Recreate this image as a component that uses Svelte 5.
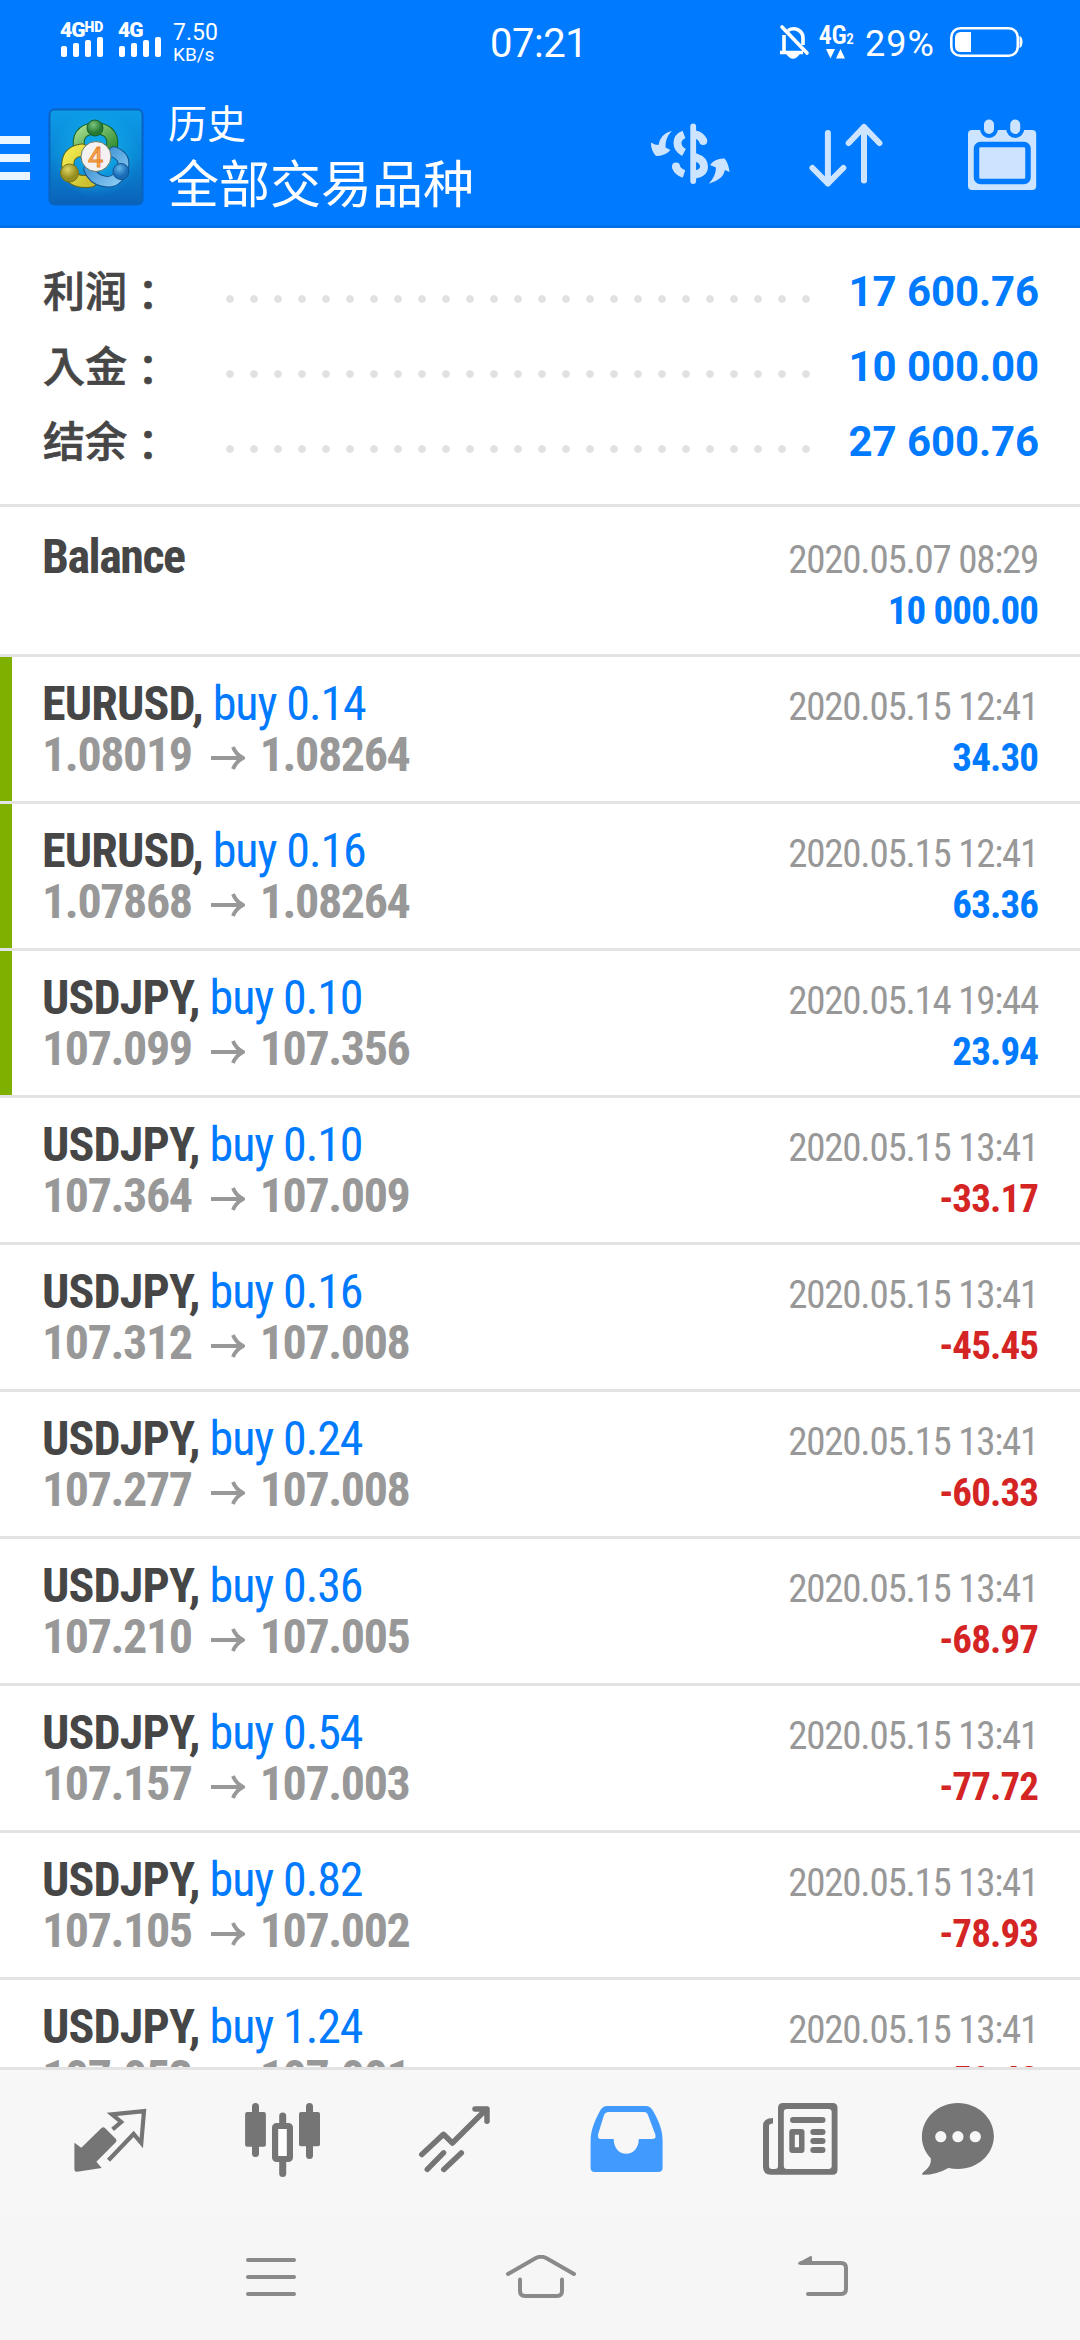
<script lang="ts">
  const summary = [
    { label: '利润', value: '17 600.76' },
    { label: '入金', value: '10 000.00' },
    { label: '结余', value: '27 600.76' }
  ];

  const deals = [
    { symbol: 'EURUSD', volume: '0.14', open: '1.08019', close: '1.08264', time: '2020.05.15 12:41', profit: '34.30', marked: true },
    { symbol: 'EURUSD', volume: '0.16', open: '1.07868', close: '1.08264', time: '2020.05.15 12:41', profit: '63.36', marked: true },
    { symbol: 'USDJPY', volume: '0.10', open: '107.099', close: '107.356', time: '2020.05.14 19:44', profit: '23.94', marked: true },
    { symbol: 'USDJPY', volume: '0.10', open: '107.364', close: '107.009', time: '2020.05.15 13:41', profit: '-33.17' },
    { symbol: 'USDJPY', volume: '0.16', open: '107.312', close: '107.008', time: '2020.05.15 13:41', profit: '-45.45' },
    { symbol: 'USDJPY', volume: '0.24', open: '107.277', close: '107.008', time: '2020.05.15 13:41', profit: '-60.33' },
    { symbol: 'USDJPY', volume: '0.36', open: '107.210', close: '107.005', time: '2020.05.15 13:41', profit: '-68.97' },
    { symbol: 'USDJPY', volume: '0.54', open: '107.157', close: '107.003', time: '2020.05.15 13:41', profit: '-77.72' },
    { symbol: 'USDJPY', volume: '0.82', open: '107.105', close: '107.002', time: '2020.05.15 13:41', profit: '-78.93' },
    { symbol: 'USDJPY', volume: '1.24', open: '107.053', close: '107.001', time: '2020.05.15 13:41', profit: '-59.48' }
  ];
</script>

<div class="screen">
  <header>
    <div class="status">
      <div class="signal">
        <span class="net">4G<sup>HD</sup></span>
        <div class="bars"><i></i><i></i><i></i><i></i></div>
      </div>
      <div class="signal second">
        <span class="net">4G</span>
        <div class="bars"><i></i><i></i><i></i><i></i></div>
      </div>
      <div class="speed"><span>7.50</span><small>KB/s</small></div>
      <div class="clock">07:21</div>
      <svg class="bell" width="32" height="36" viewBox="0 0 32 36" fill="none" stroke="#fff" stroke-width="3.6">
        <path d="M6 11V27M10 6.500C17 2 25 7 25 14V21M2 28.500H25" />
        <path d="M4 3L29 29" stroke-linecap="round" />
        <path d="M9 29.500Q15 38 21 29.500Z" fill="#fff" stroke-width="2" />
      </svg>
      <div class="data">
        <span>4G<sub>2</sub></span>
        <svg width="20" height="10" viewBox="0 0 20 10" fill="#fff"><path d="M0 0H9L4.500 9.500ZM10 9.500H19L14.500 0Z" /></svg>
      </div>
      <span class="percent">29%</span>
      <svg class="battery" width="73" height="30" viewBox="0 0 73 30">
        <rect x="1.300" y="1.300" width="66.500" height="27.400" rx="9" fill="none" stroke="#fff" stroke-width="2.600" />
        <path d="M21 5V25H11Q5 25 5 19V11Q5 5 11 5Z" fill="#fff" />
        <path d="M69.500 9Q72.500 10 72.500 15T69.500 21Z" fill="#fff" />
      </svg>
    </div>

    <div class="toolbar">
      <div class="menu"><i></i><i></i><i></i></div>
      <svg class="logo" width="96" height="98" viewBox="0 0 96 98">
        <defs>
          <linearGradient id="tile" x1="0" y1="0" x2="0" y2="1">
            <stop offset="0" stop-color="#0c9ce8" />
            <stop offset=".5" stop-color="#0a86d4" />
            <stop offset="1" stop-color="#0a62b8" />
          </linearGradient>
          <radialGradient id="glow"><stop offset="0" stop-color="#12b4ee" /><stop offset="1" stop-color="#12b4ee" stop-opacity="0" /></radialGradient>
          <linearGradient id="green" x1="0" y1="0" x2="1" y2="1"><stop offset="0" stop-color="#a4dc8c" /><stop offset="1" stop-color="#2c8a2e" /></linearGradient>
          <linearGradient id="yellow" x1="0" y1="0" x2="1" y2="1"><stop offset="0" stop-color="#f2ea4e" /><stop offset="1" stop-color="#c9bd30" /></linearGradient>
          <linearGradient id="blue" x1="0" y1="0" x2="1" y2="1"><stop offset="0" stop-color="#2f86cc" /><stop offset="1" stop-color="#8ccdf5" /></linearGradient>
          <radialGradient id="headGreen" cx=".4" cy=".3"><stop offset="0" stop-color="#7cc47c" /><stop offset="1" stop-color="#257a35" /></radialGradient>
          <radialGradient id="headYellow" cx=".4" cy=".3"><stop offset="0" stop-color="#ddd662" /><stop offset="1" stop-color="#958d1e" /></radialGradient>
          <radialGradient id="headBlue" cx=".4" cy=".3"><stop offset="0" stop-color="#62b6ea" /><stop offset="1" stop-color="#1a6cb6" /></radialGradient>
        </defs>
        <rect x="1.500" y="1.500" width="93" height="95" rx="5" fill="url(#tile)" stroke="#0b63c0" stroke-width="2" />
        <circle cx="48" cy="46" r="44" fill="url(#glow)" />
        <g fill="none" stroke-linecap="round">
          <path d="M32 43Q26 22 47.500 20Q69 22 63 43" stroke="#17602a" stroke-width="12" />
          <path d="M32 43Q26 22 47.500 20Q69 22 63 43" stroke="url(#green)" stroke-width="10" />
          <path d="M34 42Q18 44 20 60Q22 76 43 73" stroke="#5e641c" stroke-width="13" />
          <path d="M34 42Q18 44 20 60Q22 76 43 73" stroke="url(#yellow)" stroke-width="11" />
          <path d="M66 44Q78 49 75 60Q69 77 55 73Q45 71 41 61" stroke="#114f8c" stroke-width="11.500" />
          <path d="M66 44Q78 49 75 60Q69 77 55 73Q45 71 41 61" stroke="url(#blue)" stroke-width="9.500" />
        </g>
        <circle cx="47" cy="20" r="8" fill="url(#headGreen)" stroke="#17602a" />
        <circle cx="21.500" cy="65" r="9" fill="url(#headYellow)" stroke="#77741c" />
        <circle cx="73" cy="63.500" r="8" fill="url(#headBlue)" stroke="#115390" />
        <circle cx="48" cy="48.500" r="15" fill="#f3f1f2" stroke="#6d7c62" />
        <text x="47.500" y="58.500" text-anchor="middle" font-size="27" font-weight="400" fill="#f8b060" stroke="#e8842c" stroke-width="1">4</text>
      </svg>
      <div class="heading">
        <span class="section">历史</span>
        <span class="filter">全部交易品种</span>
      </div>
      <svg class="tool-dollar" width="90" height="80" viewBox="0 0 90 80" fill="none" stroke="#cce4ff" stroke-width="8">
        <path d="M48.200 6.500V61" stroke-width="5.800" stroke-linecap="round" />
        <path d="M39 14.500Q32.500 17 32.500 23T39 32.500M50 14.500Q56 15.500 58.200 21M50 37Q59 40 59 46.500T50 54.500M31 47Q33 52 39 54" />
        <circle cx="58.200" cy="21" r="4" fill="#cce4ff" stroke="none" />
        <circle cx="31" cy="46.500" r="4" fill="#cce4ff" stroke="none" />
        <g fill="#cce4ff" stroke="none">
          <path d="M26.900 10.700Q15 14 13.500 25Q10 25 5.900 22.500Q6 31 11 36Q20 36 25.500 30L20.500 27.500Q20 18 26.900 10.700Z" />
          <path d="M63.700 63.700Q78 60 80 50L84.500 52Q83.500 43 79.500 38.500Q70 38 65 45L71 47.500Q71 56 63.700 63.700Z" />
        </g>
      </svg>
      <svg class="tool-sort" width="80" height="80" viewBox="0 0 80 80" fill="none" stroke="#cce4ff" stroke-width="6" stroke-linecap="round" stroke-linejoin="round">
        <path d="M22.900 13V63.500M7.500 48L22.900 63.500L38.300 48M59 60.500V7M43.700 23L59 7L74.400 23" />
      </svg>
      <svg class="tool-calendar" width="80" height="80" viewBox="0 0 80 80" fill="#cce4ff">
        <rect x="5" y="15" width="68.200" height="60" rx="4" />
        <rect x="13.500" y="29.500" width="51.500" height="37" rx="4" fill="none" stroke="#007aff" stroke-width="5.500" />
        <g stroke="#007aff" stroke-width="4">
          <rect x="19" y="2.500" width="14" height="18.500" rx="7" />
          <rect x="45.200" y="2.500" width="14" height="18.500" rx="7" />
        </g>
      </svg>
    </div>
  </header>

  <main>
    <section class="summary">
      {#each summary as item}
        <div class="total">
          <span class="label">{item.label}<span class="colon">：</span></span>
          <span class="dots"></span>
          <span class="value">{item.value}</span>
        </div>
      {/each}
    </section>

    <div class="row balance">
      <div class="line"><b class="symbol">Balance</b><span class="time">2020.05.07 08:29</span></div>
      <div class="line"><span>&nbsp;</span><b class="profit">10 000.00</b></div>
    </div>

    {#each deals as deal}
      <div class="row" class:marked={deal.marked}>
        <div class="line">
          <span class="title"><b class="symbol">{deal.symbol},</b> <span class="side">buy {deal.volume}</span></span>
          <span class="time">{deal.time}</span>
        </div>
        <div class="line">
          <div class="prices">
            <span>{deal.open}</span>
            <svg width="34" height="26" viewBox="0 0 34 26" fill="none" stroke="#989898" stroke-width="3.800">
              <path d="M0 13H32M22 2Q24.500 9 32 13Q24.500 17 22 24" />
            </svg>
            <span>{deal.close}</span>
          </div>
          <b class="profit" class:loss={deal.profit.startsWith('-')}>{deal.profit}</b>
        </div>
      </div>
    {/each}
  </main>

  <nav class="tabs">
    <svg viewBox="0 0 80 80">
      <path d="M4.400 42.700L11.300 47.700L31.500 28Q33.300 26.500 35 28L46 39Q47 40.500 46 42L26.400 61.700L31.700 68L7 71.800Q4.400 72 4.400 69.500Z" />
      <path d="M42.600 29.300L51.200 22L41.900 14.300L74 11.200L71.300 43L63.600 34L38.500 60.300" fill="none" stroke="#757575" stroke-width="4.200" />
    </svg>
    <svg viewBox="0 0 80 80">
      <path d="M13.500 6.500V53.500M67.500 6.500V55.500M40.700 16V25M40.700 60V73.500" stroke="#757575" stroke-width="7" stroke-linecap="round" />
      <rect x="3.100" y="12" width="20.800" height="34.700" rx="2" />
      <rect x="57" y="12" width="21" height="34.300" rx="2" />
      <rect x="33.100" y="26" width="14.800" height="33" rx="1.500" fill="#fff" stroke="#757575" stroke-width="6.200" />
    </svg>
    <svg viewBox="0 0 80 80" class="stroke">
      <path d="M7.800 54.500L29.500 34.300L38.400 43L72.500 9M61 8.900H73V21.300M13.300 69.400L29.500 52.800M29.800 69.400L47.300 53" />
    </svg>
    <svg viewBox="0 0 80 80" class="active">
      <path fill-rule="evenodd" d="M21 6H60Q64 6 66.500 10C73 21 76.600 30 76.600 41V67.500Q76.600 72 72 72H9Q4.600 72 4.600 67.500V41C4.600 30 9 20 14.500 10Q17 6 21 6ZM22.500 12Q19.500 12 18 15L12.200 34Q11 39 15 39H27.700C27.700 48 33 53.700 40.200 53.700S52.800 48 52.800 39H66Q70.700 39 69.300 34.500L62 15Q61 12 58 12Z" />
    </svg>
    <svg viewBox="0 0 80 80" fill-rule="evenodd" class="news">
      <path d="M23 3H72.500Q77.500 3 77.500 8V69.700Q77.500 74.700 72.500 74.700H11Q3 74.700 3 66.700V26Q3 18 13 18V23.500Q9 23.500 9 26V66Q9 69 12 69H15Q18 69 18 66V8Q18 3 23 3ZM27 9Q23.800 9 23.800 12V66Q23.800 69 27 69H68.500Q71.700 69 71.700 66V12Q71.700 9 68.500 9Z" />
      <rect x="30" y="17" width="35.500" height="6" rx="3" />
      <path d="M32.300 29H41.500Q44.500 29 44.500 32V50Q44.500 53 41.500 53H32.300Q29.300 53 29.300 50V32Q29.300 29 32.300 29ZM34.800 34.700V47.200H39V34.700Z" />
      <rect x="50.300" y="29" width="15.200" height="6" rx="3" />
      <rect x="50.300" y="38" width="15.200" height="6" rx="3" />
      <rect x="50.300" y="47" width="15.200" height="6" rx="3" />
    </svg>
    <svg viewBox="0 0 80 80" class="chat">
      <path d="M12.800 58.300C7 52 3.900 45 3.900 37C3.900 18 20 3 39.900 3S75.900 18 75.900 36S60 69 39.900 69Q35 69 30.500 68Q18 75 5 74.800Q3 74.500 5 72.500Q14 66 12.800 58.300Z" />
      <g fill="#f7f7f7"><circle cx="22.800" cy="36.700" r="5.600" /><circle cx="39.900" cy="36.700" r="5.600" /><circle cx="57.300" cy="36.700" r="5.600" /></g>
    </svg>
  </nav>

  <div class="system">
    <svg width="52" height="44" viewBox="0 0 52 44"><path d="M3 5H49M3 22H49M3 39H49" /></svg>
    <svg width="72" height="44" viewBox="0 0 72 44"><path d="M3 19L30 3.500Q36 0 42 3.500L69 19M15 24.500V36Q15 41 20 41H52Q57 41 57 36V24.500" /></svg>
    <svg class="back" width="52" height="44" viewBox="0 0 52 44"><path d="M4 8H44Q49 8 49 13V34Q49 39 44 39H11" /><path d="M2 8.500L14 2V8.500Z" stroke-width="2" fill="#8a8a8a" /></svg>
  </div>
</div>

<style>
  :global(body) {
    margin: 0;
    background: #fff;
  }

  .screen {
    width: 1080px;
    height: 2340px;
    display: flex;
    flex-direction: column;
    overflow: hidden;
    font-family: Roboto, 'Noto Sans CJK SC', sans-serif;
    background: #fff;
  }

  header {
    box-sizing: border-box;
    height: 228px;
    flex-shrink: 0;
    color: #fff;
    background: #007aff;
    border-bottom: 3px solid #0070ea;
  }

  .status {
    display: flex;
    align-items: flex-start;
    height: 84px;
    padding-left: 60px;
  }

  .signal {
    width: 58px;
    padding-top: 20px;
    flex-shrink: 0;
  }

  .signal.second {
    width: 55px;
  }

  .net {
    display: block;
    height: 17px;
    font-size: 21px;
    line-height: 20px;
    font-weight: 900;
    letter-spacing: -1px;
    white-space: nowrap;
  }

  .net sup {
    font-size: 14px;
    line-height: 0;
    vertical-align: 5px;
    letter-spacing: 0;
  }

  .bars {
    display: flex;
    align-items: flex-end;
    gap: 6px;
    height: 20px;
    padding-left: 1px;
  }

  .bars i {
    width: 6px;
    height: 11px;
    border-radius: 2px;
    background: #fff;
  }

  .bars i:nth-child(2) {
    height: 14px;
  }

  .bars i:nth-child(3) {
    height: 17px;
  }

  .bars i:nth-child(4) {
    height: 20px;
  }

  .speed {
    display: flex;
    flex-direction: column;
    width: 317px;
    padding-top: 22px;
    font-size: 23px;
    line-height: 22px;
  }

  .speed small {
    font-size: 19px;
    line-height: 22px;
  }

  .clock {
    width: 288px;
    padding-top: 20px;
    font-size: 40px;
    line-height: 48px;
    letter-spacing: -0.5px;
  }

  .bell {
    margin-top: 24px;
  }

  .data {
    display: flex;
    flex-direction: column;
    align-items: center;
    width: 36px;
    margin: 24px 0 0 8px;
    font-size: 26px;
    line-height: 22px;
    font-weight: 600;
    font-stretch: 75%;
    letter-spacing: -0.5px;
    white-space: nowrap;
  }

  .data svg {
    margin-top: 3px;
  }

  .data sub {
    font-size: 15px;
    line-height: 0;
    vertical-align: 0;
  }

  .percent {
    width: 86px;
    padding: 24px 0 0 11px;
    box-sizing: border-box;
    font-size: 36px;
    line-height: 41px;
    letter-spacing: 1px;
  }

  .battery {
    margin-top: 27px;
    margin-left: 10px;
  }

  .toolbar {
    display: flex;
    align-items: flex-start;
    height: 141px;
  }

  .menu {
    display: flex;
    flex-direction: column;
    gap: 10px;
    width: 30px;
    margin-top: 52px;
  }

  .menu i {
    height: 8px;
    background: #eaf6ff;
  }

  .logo {
    margin: 24px 0 0 18px;
  }

  .heading {
    display: flex;
    flex-direction: column;
    width: 477px;
    margin-left: 24px;
    white-space: nowrap;
  }

  .section {
    margin-top: 12px;
    font-size: 39px;
    line-height: 58px;
  }

  .filter {
    font-size: 51px;
    line-height: 64px;
  }

  .tool-dollar {
    margin-top: 36px;
  }

  .tool-sort {
    margin: 36px 0 0 70px;
  }

  .tool-calendar {
    margin: 31px 0 0 78px;
  }

  main {
    flex: 1;
    min-height: 0;
    overflow: hidden;
  }

  .summary {
    box-sizing: border-box;
    height: 276px;
    padding-top: 26px;
  }

  .total {
    display: flex;
    align-items: center;
    height: 75px;
    padding: 0 41px 0 42px;
  }

  .label {
    width: 175px;
    margin-left: 1px;
    padding-bottom: 6px;
    color: #464646;
    font-family: 'Noto Sans CJK TC', sans-serif;
    font-size: 42px;
    line-height: 60px;
    font-weight: 500;
    white-space: nowrap;
    -webkit-text-stroke: 0.7px #464646;
  }

  .colon {
    line-height: 0;
    vertical-align: -4px;
  }

  .dots {
    width: 600px;
    height: 24px;
    margin-top: 14px;
    background: radial-gradient(circle at 12px 12px, #e1e1e1 3.4px, transparent 4.2px) 0 0 / 24px 24px;
  }

  .value {
    flex: 1;
    color: #007aff;
    font-size: 42px;
    font-weight: 700;
    letter-spacing: -0.1px;
    text-align: right;
    white-space: nowrap;
  }

  .row {
    box-sizing: border-box;
    height: 147px;
    padding: 21px 42px 0;
    border-top: 3px solid #e3e3e3;
    font-size: 48px;
    font-stretch: 75%;
  }

  .row.balance {
    height: 150px;
    padding-top: 24px;
  }

  .row.marked {
    background: linear-gradient(#7fb000, #7fb000) 0 0 / 12px 100% no-repeat;
  }

  .line {
    display: flex;
    justify-content: space-between;
    align-items: baseline;
    height: 51px;
    line-height: 51px;
    white-space: nowrap;
  }

  .symbol {
    color: #464646;
    letter-spacing: -0.85px;
  }

  .balance .symbol {
    letter-spacing: -1.5px;
  }

  .title,
  .side {
    color: #007aff;
    letter-spacing: -1.1px;
  }

  .prices {
    display: flex;
    align-items: baseline;
    gap: 19px;
    color: #989898;
    font-weight: 700;
    letter-spacing: -1.4px;
  }

  .prices svg {
    margin-right: -4px;
  }

  .time {
    color: #989898;
    font-size: 39px;
    letter-spacing: -1.25px;
  }

  .profit {
    color: #007aff;
    font-size: 39px;
    letter-spacing: -0.9px;
  }

  .profit.loss {
    color: #d42424;
  }

  .tabs {
    display: flex;
    gap: 92px;
    box-sizing: border-box;
    height: 149px;
    flex-shrink: 0;
    padding: 30px 0 0 70px;
    border-top: 3px solid #e3e3e3;
    background: #f7f7f7;
  }

  .tabs svg {
    width: 80px;
    height: 80px;
    flex-shrink: 0;
    fill: #757575;
  }

  .tabs .stroke {
    fill: none;
    stroke: #757575;
    stroke-width: 5.500;
    stroke-linecap: round;
    stroke-linejoin: round;
  }

  .tabs .active {
    fill: #419bff;
  }

  .tabs .news {
    margin-left: 2px;
  }

  .tabs .chat {
    margin-left: -14px;
  }

  .system {
    display: flex;
    gap: 208px;
    box-sizing: border-box;
    height: 124px;
    flex-shrink: 0;
    padding: 39px 0 0 245px;
    background: #f6f6f6;
  }

  .system svg {
    fill: none;
    stroke: #8a8a8a;
    stroke-width: 4;
    stroke-linecap: round;
    stroke-linejoin: round;
  }

  .system .back {
    margin-left: 12px;
  }
</style>
